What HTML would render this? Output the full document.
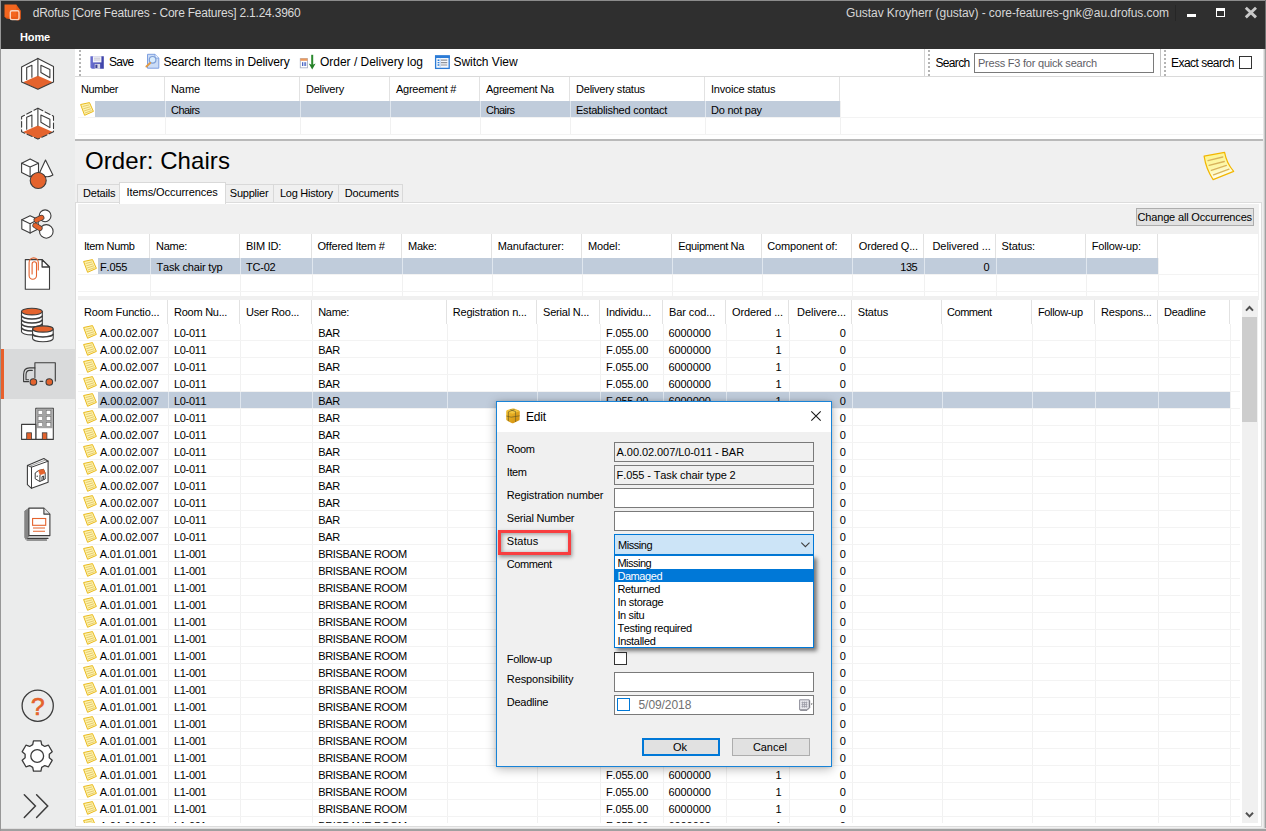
<!DOCTYPE html>
<html lang="en"><head><meta charset="utf-8"><title>dRofus</title>
<style>
*{box-sizing:border-box;margin:0;padding:0}
html,body{width:1266px;height:831px;overflow:hidden;background:#f0f0f0}
body{position:relative;font-family:"Liberation Sans",sans-serif;font-size:11px;color:#000;font-kerning:none}
.a{position:absolute}
.t{position:absolute;white-space:pre;line-height:14px;height:14px}
.vl{position:absolute;width:1px;background:#e6e6e6}
.hl{position:absolute;height:1px;background:#efefef}
svg{position:absolute;overflow:visible}
</style></head>
<body>
<div class="a" style="left:0px;top:0px;width:1266px;height:49px;background:#2f2f2f;"></div>
<div class="a" style="left:0px;top:0px;width:1266px;height:1px;background:#8c8c8c;"></div>
<svg style="left:0px;top:0px" width="24" height="24" viewBox="0 0 24 24"><path d="M16.4 4.8 L20.8 10.8 L20.8 19.2 L18.6 20.6 L6.4 18.6 L4.5 16.8 Z" fill="#ea5a17"/><path d="M4.5 4.6 L16.4 4.4 L16.4 16.8 L4.5 16.8 Z" fill="#f4661f"/><rect x="10.3" y="10.8" width="8.7" height="8.8" rx="1.6" fill="none" stroke="#fbd3bd" stroke-width="1.4"/></svg>
<div class="t" style="font-size:12px;line-height:14px;height:14px;color:#dadada;letter-spacing:-0.220px;left:32.7px;top:6px;">dRofus [Core Features - Core Features] 2.1.24.3960</div>
<div class="t" style="font-weight:bold;color:#ffffff;letter-spacing:-0.139px;left:20.0px;top:30px;">Home</div>
<div class="t" style="font-size:12px;line-height:14px;height:14px;color:#d6d6d6;letter-spacing:-0.068px;left:846.0px;top:6px;">Gustav Kroyherr (gustav) - core-features-gnk@au.drofus.com</div>
<div class="a" style="left:1175px;top:5px;width:1px;height:16px;background:#262626;"></div>
<div class="a" style="left:1187px;top:14px;width:9px;height:3px;background:#ffffff;"></div>
<div class="a" style="left:1216px;top:8px;width:9px;height:9px;background:transparent;border:1px solid #ffffff;border-top-width:3px"></div>
<svg style="left:1245px;top:7px" width="12" height="11" viewBox="0 0 12 11"><path d="M0.8 0.8 L11 10.4 M11 0.8 L0.8 10.4" stroke="#c9c9c9" stroke-width="2.9" fill="none"/></svg>
<div class="a" style="left:0px;top:49px;width:75px;height:782px;background:#ebecec;"></div>
<div class="a" style="left:1px;top:349px;width:74px;height:50px;background:#d9dadb;"></div>
<div class="a" style="left:1px;top:349px;width:3px;height:50px;background:#e8602c;"></div>
<svg style="left:0px;top:0px" width="76" height="831" viewBox="0 0 76 831"><g transform="translate(0,0)"><path d="M37.9 58.4 L53.5 66.4 L53.5 82 L37.9 89.3 L21.6 82 L21.6 67 Z" fill="#fff" stroke="none"/><path d="M37.9 75.8 L52.8 82.3 L37.9 89.3 L23 82.3 Z" fill="#e4632d"/><path d="M37.9 58.4 L53.5 66.4 L53.5 82 L37.9 89.3 L21.6 82 L21.6 67 Z" fill="none" stroke="#3c3c3c" stroke-width="1.1" stroke-linejoin="round" stroke-linecap="round"/><path d="M37.9 58.4 L37.9 75.8" fill="none" stroke="#3c3c3c" stroke-width="1.1" stroke-linejoin="round" stroke-linecap="round"/><path d="M26.7 79.5 L26.7 67.5 L31.9 65.2 L31.9 77.2" fill="none" stroke="#3c3c3c" stroke-width="1.1" stroke-linejoin="round" stroke-linecap="round"/><path d="M40.9 65.2 L49.9 69.5 L49.9 77.8 L40.9 72.5 Z" fill="none" stroke="#3c3c3c" stroke-width="1.1" stroke-linejoin="round" stroke-linecap="round"/></g><g transform="translate(0,49.8)"><path d="M37.9 58.4 L53.5 66.4 L53.5 82 L37.9 89.3 L21.6 82 L21.6 67 Z" fill="#fff" stroke="none"/><path d="M37.9 75.8 L52.8 82.3 L37.9 89.3 L23 82.3 Z" fill="#e4632d"/><path d="M37.9 58.4 L53.5 66.4 L53.5 82 L37.9 89.3 L21.6 82 L21.6 67 Z" fill="none" stroke="#3c3c3c" stroke-width="1.1" stroke-linejoin="round" stroke-linecap="round" stroke-dasharray="5.5 2.6"/><path d="M37.9 58.4 L37.9 75.8" fill="none" stroke="#3c3c3c" stroke-width="1.1" stroke-linejoin="round" stroke-linecap="round"/><path d="M26.7 79.5 L26.7 67.5 L31.9 65.2 L31.9 77.2" fill="none" stroke="#3c3c3c" stroke-width="1.1" stroke-linejoin="round" stroke-linecap="round"/><path d="M40.9 65.2 L49.9 69.5 L49.9 77.8 L40.9 72.5 Z" fill="none" stroke="#3c3c3c" stroke-width="1.1" stroke-linejoin="round" stroke-linecap="round"/></g><path d="M30.1 158.9 L38.5 163.2 L38.5 172.4 L30.1 176.7 L21.6 172.4 L21.6 163.2 Z" fill="#fff" stroke="#3c3c3c" stroke-width="1.1" stroke-linejoin="round" stroke-linecap="round"/><path d="M21.6 163.2 L30.1 167 L38.5 163.2 M30.1 167 L30.1 176.7" fill="none" stroke="#3c3c3c" stroke-width="1.1" stroke-linejoin="round" stroke-linecap="round"/><path d="M45.5 160 L39.7 172.6 Q45 179.5 52.9 175 Z" fill="#fff" stroke="#3c3c3c" stroke-width="1.1" stroke-linejoin="round" stroke-linecap="round"/><circle cx="38.2" cy="180.5" r="8" fill="#e4632d" stroke="#3c3c3c" stroke-width="1.1" stroke-linejoin="round"/><circle cx="45.1" cy="215.8" r="5.9" fill="#fff" stroke="#3c3c3c" stroke-width="1.1" stroke-linejoin="round" stroke-linecap="round"/><circle cx="46.3" cy="231.4" r="6.8" fill="#fff" stroke="#3c3c3c" stroke-width="1.1" stroke-linejoin="round" stroke-linecap="round"/><path d="M30.1 215.7 L38.2 219.6 L38.2 229 L30.1 233.1 L21.8 229 L21.8 219.8 Z" fill="#fff" stroke="#3c3c3c" stroke-width="1.1" stroke-linejoin="round" stroke-linecap="round"/><path d="M21.8 219.8 L30.1 223.8 L38.2 219.6 M30.1 223.8 L30.1 233.1" fill="none" stroke="#3c3c3c" stroke-width="1.1" stroke-linejoin="round" stroke-linecap="round"/><path d="M36.4 220.1 L41.6 217.6 M35.2 225.4 L39.8 228.2" stroke="#3c3c3c" stroke-width="5.6" stroke-linecap="round" fill="none"/><path d="M36.4 220.1 L41.6 217.6 M35.2 225.4 L39.8 228.2" stroke="#e4632d" stroke-width="4.2" stroke-linecap="round" fill="none"/><path d="M25.3 259.6 L42.1 259.6 L49.5 267 L49.5 289.3 L25.3 289.3 Z" fill="#fff" stroke="#3c3c3c" stroke-width="1.1" stroke-linejoin="round" stroke-linecap="round"/><path d="M42.1 259.6 L42.1 267 L49.5 267 Z" fill="#fff" stroke="#3c3c3c" stroke-width="1.3" stroke-linejoin="round"/><path d="M38.3 270 L38.3 262.5 A4.6 4.6 0 0 0 29.1 262.5 L29.1 275.5 A3.7 3.7 0 0 0 36.5 275.5 L36.5 264 A2.2 2.2 0 0 0 32.1 264 L32.1 274" fill="none" stroke="#e4632d" stroke-width="1.1" stroke-linecap="round"/><path d="M21.5 311.6 L21.5 331.6 A10.4 3.3 0 0 0 42.3 331.6 L42.3 311.6 Z" fill="#fff" stroke="#3c3c3c" stroke-width="1.1" stroke-linejoin="round" stroke-linecap="round"/><path d="M21.5 315.6 A10.4 3.3 0 0 0 42.3 315.6" fill="none" stroke="#3c3c3c" stroke-width="1.5"/><path d="M21.5 319.6 A10.4 3.3 0 0 0 42.3 319.6" fill="none" stroke="#3c3c3c" stroke-width="1.5"/><path d="M21.5 323.6 A10.4 3.3 0 0 0 42.3 323.6" fill="none" stroke="#3c3c3c" stroke-width="1.5"/><path d="M21.5 327.6 A10.4 3.3 0 0 0 42.3 327.6" fill="none" stroke="#3c3c3c" stroke-width="1.5"/><ellipse cx="31.9" cy="311.6" rx="10.4" ry="3.3" fill="#e4632d" stroke="#3c3c3c" stroke-width="1.1" stroke-linejoin="round"/><path d="M32.599999999999994 329 L32.599999999999994 338.6 A10.3 3.1 0 0 0 53.2 338.6 L53.2 329 Z" fill="#fff" stroke="#3c3c3c" stroke-width="1.1" stroke-linejoin="round" stroke-linecap="round"/><path d="M32.599999999999994 333.8 A10.3 3.1 0 0 0 53.2 333.8" fill="none" stroke="#3c3c3c" stroke-width="1.5"/><ellipse cx="42.9" cy="329" rx="10.3" ry="3.1" fill="#e4632d" stroke="#3c3c3c" stroke-width="1.1" stroke-linejoin="round"/><path d="M34.9 377.5 L34.9 362.7 L55.3 362.7 L55.3 381" fill="none" stroke="#3c3c3c" stroke-width="1.1" stroke-linejoin="round" stroke-linecap="round"/><path d="M34.9 367.9 L29.5 367.9 Q23.6 367.9 23.6 374.5 L23.6 381.6 L28.6 381.6" fill="none" stroke="#3c3c3c" stroke-width="1.1" stroke-linejoin="round" stroke-linecap="round"/><path d="M32.3 370.4 L29.8 370.4 Q26 370.4 26 375 L26 379.8 L28.6 379.8" fill="none" stroke="#3c3c3c" stroke-width="1.1" stroke-linejoin="round" stroke-linecap="round"/><path d="M40 381.4 L42.8 381.4" fill="none" stroke="#3c3c3c" stroke-width="1.1" stroke-linejoin="round" stroke-linecap="round"/><circle cx="33.4" cy="382" r="3.3" fill="#e4632d" stroke="#3c3c3c" stroke-width="1.1" stroke-linejoin="round"/><circle cx="49.3" cy="382" r="3.3" fill="#e4632d" stroke="#3c3c3c" stroke-width="1.1" stroke-linejoin="round"/><rect x="35.8" y="408.2" width="17.5" height="31.2" fill="#fff" stroke="#3c3c3c" stroke-width="1.1" stroke-linejoin="round" stroke-linecap="round"/><rect x="36.4" y="408.8" width="16.3" height="19.4" fill="#a4a4a4"/><rect x="21.6" y="424.4" width="14.2" height="15" fill="#fff" stroke="#3c3c3c" stroke-width="1.1" stroke-linejoin="round" stroke-linecap="round"/><rect x="38.1" y="410.4" width="4.6" height="4" fill="#fff" stroke="#666" stroke-width="0.5"/><rect x="38.1" y="416.4" width="4.6" height="4" fill="#fff" stroke="#666" stroke-width="0.5"/><rect x="38.1" y="422.6" width="4.6" height="4" fill="#fff" stroke="#666" stroke-width="0.5"/><rect x="46.2" y="410.4" width="4.6" height="4" fill="#fff" stroke="#666" stroke-width="0.5"/><rect x="46.2" y="416.4" width="4.6" height="4" fill="#fff" stroke="#666" stroke-width="0.5"/><rect x="46.2" y="422.6" width="4.6" height="4" fill="#fff" stroke="#666" stroke-width="0.5"/><rect x="26.7" y="432.8" width="4.8" height="6.6" fill="#e4632d" stroke="#3c3c3c" stroke-width="0.8"/><rect x="42.3" y="432.8" width="4.6" height="6.6" fill="#e4632d" stroke="#3c3c3c" stroke-width="0.8"/><path d="M27.4 465.4 L43.9 458.5 L48.1 461.2 L48.1 482.3 L31.5 488.3 L27.4 484.7 Z" fill="#fff" stroke="#3c3c3c" stroke-width="1.1" stroke-linejoin="round" stroke-linecap="round"/><path d="M31.5 467.2 L48.1 461.2 M31.5 467.2 L31.5 488.3 M31.5 467.2 L27.4 465.4" fill="none" stroke="#3c3c3c" stroke-width="1" stroke-linecap="round"/><path d="M29.4 466.3 L46 459.8" fill="none" stroke="#777" stroke-width="0.7"/><path d="M35.2 473 L38.5 470.5 L43.5 469.3 L45.2 473.2 L45.2 479 L39.8 481.5 L35.2 478.8 Z" fill="#fff" stroke="#3c3c3c" stroke-width="1" stroke-linejoin="round"/><path d="M38.5 470.5 L43.5 469.3 L45.2 473.2 L40 474.8 Z" fill="#e4632d" stroke="#e4632d" stroke-width="0.6"/><path d="M40 474.8 L39.8 481.5 M42 480.3 L42 476.6 L43.6 476 L43.6 479.6" fill="none" stroke="#3c3c3c" stroke-width="1"/><circle cx="37.2" cy="476.3" r="0.7" fill="#3c3c3c"/><path d="M27 540 L46.5 540 M26 538.4 L48 538.4" fill="none" stroke="#3c3c3c" stroke-width="1.1" stroke-linejoin="round" stroke-linecap="round"/><path d="M24.8 511 L29 508.2 L29 536 L26 539.5 L24.8 537.5 Z" fill="#858585" stroke="#858585" stroke-width="1" stroke-linejoin="round"/><path d="M28.9 508.1 L43.9 508.1 L49.9 514.1 L49.9 535.6 L28.9 535.6 Z" fill="#fff" stroke="#3c3c3c" stroke-width="1.1" stroke-linejoin="round" stroke-linecap="round"/><path d="M43.9 508.1 L43.9 514.1 L49.9 514.1" fill="#e3e3e3" stroke="#3c3c3c" stroke-width="1.1" stroke-linejoin="round"/><rect x="32.6" y="518.5" width="13.1" height="6.8" fill="none" stroke="#e4632d" stroke-width="1.1"/><path d="M33 528 L45 528 M33 531.3 L45 531.3" stroke="#e4632d" stroke-width="1.1" fill="none"/><circle cx="37.7" cy="705.7" r="15.6" fill="none" stroke="#3c3c3c" stroke-width="1.3"/><text x="37.9" y="714.6" text-anchor="middle" font-family="Liberation Sans, sans-serif" font-size="24.5" fill="#e4632d" stroke="#e4632d" stroke-width="0.7">?</text><path d="M32.71 744.66 L33.48 740.85 L40.92 740.85 L41.69 744.66 L44.78 746.44 L48.46 745.20 L52.18 751.65 L49.27 754.22 L49.27 757.78 L52.18 760.35 L48.46 766.80 L44.78 765.56 L41.69 767.34 L40.92 771.15 L33.48 771.15 L32.71 767.34 L29.62 765.56 L25.94 766.80 L22.22 760.35 L25.13 757.78 L25.13 754.22 L22.22 751.65 L25.94 745.20 L29.62 746.44 Z" fill="#fff" stroke="#3c3c3c" stroke-width="1.3" stroke-linejoin="round"/><circle cx="37.2" cy="756" r="6.4" fill="#fff" stroke="#3c3c3c" stroke-width="1.3"/><path d="M24.3 794.8 L35.4 805.9 L24.3 817.4 M36.6 794.8 L47.7 805.9 L36.6 817.4" fill="none" stroke="#3c3c3c" stroke-width="1.5" stroke-linecap="round" stroke-linejoin="miter"/></svg>
<div class="a" style="left:75px;top:49px;width:1191px;height:91px;background:#ffffff;"></div>
<div class="a" style="left:75px;top:76px;width:1191px;height:1px;background:#dadada;"></div>
<div class="a" style="left:79px;top:50px;width:2px;height:26px;background:repeating-linear-gradient(#b4b4b4 0 2px,transparent 2px 4px)"></div>
<svg style="left:89px;top:55px" width="16" height="16" viewBox="0 0 16 16"><defs><linearGradient id="sv" x1="0" y1="0" x2="1" y2="0"><stop offset="0" stop-color="#6a70d2"/><stop offset="1" stop-color="#3b40a6"/></linearGradient></defs><path d="M1.4 1.2 H14.8 V13.8 H2.8 L1.4 12.4 Z" fill="url(#sv)"/><rect x="3.9" y="1.2" width="8.5" height="6.2" fill="#f4f4f8"/><path d="M5 3.2 H11.2 M5 5 H11.2" stroke="#b9b9c6" stroke-width="0.8"/><rect x="5.7" y="8.9" width="5.4" height="4.9" fill="#d9dae6"/><rect x="6.4" y="9.7" width="2" height="3.3" fill="#3b3f96"/></svg>
<div class="t" style="font-size:12px;line-height:14px;height:14px;letter-spacing:-0.712px;left:109.0px;top:55px;">Save</div>
<svg style="left:143.6px;top:53.2px" width="16" height="16" viewBox="0 0 16 16"><path d="M3.5 1.3 H11 L14.8 5.1 V15.2 H3.5 Z" fill="#cbdcf6" stroke="#7d9fe0" stroke-width="1"/><path d="M11 1.3 V5.1 H14.8" fill="#eef4fd" stroke="#7d9fe0" stroke-width="0.9"/><circle cx="8.6" cy="6.8" r="3.3" fill="#d9ecfc" stroke="#7f9fd6" stroke-width="1.2"/><path d="M6.2 10 L2.4 13.5" stroke="#e09a45" stroke-width="1.9" stroke-linecap="round"/></svg>
<div class="t" style="font-size:12px;line-height:14px;height:14px;letter-spacing:-0.168px;left:163.5px;top:55px;">Search Items in Delivery</div>
<svg style="left:299px;top:54px" width="18" height="16" viewBox="0 0 18 16"><rect x="1.3" y="4.6" width="7.2" height="9.2" fill="#fff" stroke="#a9b2c6" stroke-width="0.9"/><rect x="1.3" y="4.4" width="7.2" height="2.4" fill="#ec9a5c"/><rect x="3" y="8.2" width="1.3" height="3.8" fill="#4a67c4"/><rect x="5.2" y="8.2" width="2" height="3.8" fill="#4a67c4" opacity="0.8"/><path d="M13.2 0.8 V12" stroke="#2b8a2e" stroke-width="2"/><path d="M9.8 9.6 L13.2 15.4 L16.6 9.6 L13.2 11 Z" fill="#237f27"/></svg>
<div class="t" style="font-size:12px;line-height:14px;height:14px;letter-spacing:-0.018px;left:320.0px;top:55px;">Order / Delivery log</div>
<svg style="left:434px;top:54px" width="16" height="16" viewBox="0 0 16 16"><rect x="1.6" y="2" width="13.6" height="12.4" fill="#f4f8fd" stroke="#2b7bd6" stroke-width="1.3"/><rect x="1" y="1.4" width="14.9" height="2.6" fill="#2b7bd6"/><path d="M3.6 6.2 H5.4 M3.6 8.6 H5.4 M3.6 11 H5.4" stroke="#2b7bd6" stroke-width="1.4"/><path d="M7 6.2 H13.2 M7 8.6 H13.2 M7 11 H13.2" stroke="#8f9299" stroke-width="1.2"/><path d="M6.2 4.5 V13.6" stroke="#a9c8ee" stroke-width="0.8"/></svg>
<div class="t" style="font-size:12px;line-height:14px;height:14px;letter-spacing:-0.062px;left:453.5px;top:55px;">Switch View</div>
<div class="a" style="left:924px;top:49px;width:1px;height:27px;background:#d4d4d4;"></div>
<div class="a" style="left:928px;top:50px;width:2px;height:26px;background:repeating-linear-gradient(#b4b4b4 0 2px,transparent 2px 4px)"></div>
<div class="t" style="font-size:12px;line-height:14px;height:14px;letter-spacing:-0.669px;left:935.5px;top:56px;">Search</div>
<div class="a" style="left:974px;top:53px;width:180px;height:20px;background:#fff;border:1px solid #7a7a7a"></div>
<div class="t" style="color:#5e5e66;letter-spacing:-0.228px;left:978.0px;top:56px;">Press F3 for quick search</div>
<div class="a" style="left:1160px;top:49px;width:1px;height:27px;background:#c4c4c4;"></div>
<div class="a" style="left:1164px;top:50px;width:2px;height:26px;background:repeating-linear-gradient(#b4b4b4 0 2px,transparent 2px 4px)"></div>
<div class="t" style="font-size:12px;line-height:14px;height:14px;letter-spacing:-0.530px;left:1171.0px;top:56px;">Exact search</div>
<div class="a" style="left:1239px;top:56px;width:13px;height:13px;background:#fff;border:1px solid #333"></div>
<svg width="0" height="0" style="left:0;top:0"><defs>
<symbol id="nt" viewBox="0 0 14 14"><path d="M0.6 2.5 L9.5 0.6 L13.4 9.4 L4.6 13.3 Z" fill="#fdf4ae" stroke="#e9b91e" stroke-width="1" stroke-linejoin="round"/><path d="M2.6 4.5 L9.2 2.9 M3.3 6.8 L10.2 4.8 M4.1 9 L11.1 6.7 M5 11 L11.6 8.6" stroke="#d6ad42" stroke-width="0.6" fill="none"/></symbol>
</defs></svg>
<div class="a" style="left:165px;top:101px;width:1px;height:34px;background:#f1f1f1;"></div>
<div class="a" style="left:164px;top:77px;width:1px;height:24px;background:#e2e2e2;"></div>
<div class="a" style="left:300px;top:101px;width:1px;height:34px;background:#f1f1f1;"></div>
<div class="a" style="left:299px;top:77px;width:1px;height:24px;background:#e2e2e2;"></div>
<div class="a" style="left:390px;top:101px;width:1px;height:34px;background:#f1f1f1;"></div>
<div class="a" style="left:389px;top:77px;width:1px;height:24px;background:#e2e2e2;"></div>
<div class="a" style="left:480px;top:101px;width:1px;height:34px;background:#f1f1f1;"></div>
<div class="a" style="left:479px;top:77px;width:1px;height:24px;background:#e2e2e2;"></div>
<div class="a" style="left:570px;top:101px;width:1px;height:34px;background:#f1f1f1;"></div>
<div class="a" style="left:569px;top:77px;width:1px;height:24px;background:#e2e2e2;"></div>
<div class="a" style="left:705px;top:101px;width:1px;height:34px;background:#f1f1f1;"></div>
<div class="a" style="left:704px;top:77px;width:1px;height:24px;background:#e2e2e2;"></div>
<div class="a" style="left:840px;top:101px;width:1px;height:34px;background:#f1f1f1;"></div>
<div class="a" style="left:839px;top:77px;width:1px;height:24px;background:#e2e2e2;"></div>
<div class="a" style="left:78px;top:117px;width:1185px;height:1px;background:#f3f3f3;"></div>
<div class="a" style="left:78px;top:134px;width:1185px;height:1px;background:#f3f3f3;"></div>
<div class="a" style="left:95px;top:101px;width:745px;height:16px;background:#c0ccdb;"></div>
<div class="a" style="left:165px;top:101px;width:1px;height:16px;background:#dfe6ee;"></div>
<div class="a" style="left:300px;top:101px;width:1px;height:16px;background:#dfe6ee;"></div>
<div class="a" style="left:390px;top:101px;width:1px;height:16px;background:#dfe6ee;"></div>
<div class="a" style="left:480px;top:101px;width:1px;height:16px;background:#dfe6ee;"></div>
<div class="a" style="left:570px;top:101px;width:1px;height:16px;background:#dfe6ee;"></div>
<div class="a" style="left:705px;top:101px;width:1px;height:16px;background:#dfe6ee;"></div>
<div class="t" style="letter-spacing:-0.353px;left:81.0px;top:82px;">Number</div>
<div class="t" style="letter-spacing:-0.084px;left:171.0px;top:82px;">Name</div>
<div class="t" style="letter-spacing:-0.223px;left:306.0px;top:82px;">Delivery</div>
<div class="t" style="letter-spacing:-0.258px;left:396.0px;top:82px;">Agreement #</div>
<div class="t" style="letter-spacing:-0.266px;left:486.0px;top:82px;">Agreement Na</div>
<div class="t" style="letter-spacing:-0.216px;left:576.0px;top:82px;">Delivery status</div>
<div class="t" style="letter-spacing:-0.216px;left:711.0px;top:82px;">Invoice status</div>
<svg style="left:80px;top:102px" width="14" height="14"><use href="#nt"/></svg>
<div class="t" style="letter-spacing:-0.546px;left:171.0px;top:103px;">Chairs</div>
<div class="t" style="letter-spacing:-0.546px;left:486.0px;top:103px;">Chairs</div>
<div class="t" style="letter-spacing:-0.226px;left:576.0px;top:103px;">Established contact</div>
<div class="t" style="letter-spacing:-0.239px;left:711.0px;top:103px;">Do not pay</div>
<div class="a" style="left:75px;top:139px;width:1191px;height:2px;background:#b9b9b9;"></div>
<div class="a" style="left:75px;top:141px;width:1191px;height:690px;background:#f0f0f0;"></div>
<div class="t" style="font-size:24px;line-height:28px;height:28px;letter-spacing:0.075px;left:85.0px;top:147px;">Order: Chairs</div>
<svg style="left:1200px;top:148px" width="40" height="36" viewBox="0 0 40 36"><defs><linearGradient id="ng" x1="0" y1="0" x2="0.35" y2="1"><stop offset="0" stop-color="#fdf58c"/><stop offset="0.6" stop-color="#fdf7a8"/><stop offset="1" stop-color="#fffef2"/></linearGradient></defs><path d="M4.1 8.2 L24.6 4.3 Q26.5 15 33.7 23.4 L13.1 31.6 Q6 21 4.1 8.2 Z" fill="url(#ng)" stroke="#f2b600" stroke-width="1.2" stroke-linejoin="round"/><path d="M8 12.6 L22.8 9 M9.1 17.4 L24.3 13.5 M11.3 22.3 L26.4 17.4 M13.5 26.8 L29 21.2" stroke="#d8b35c" stroke-width="1.3" fill="none" stroke-linecap="round"/></svg>
<div class="a" style="left:75px;top:202px;width:1187px;height:625px;background:#f0f0f0;border:1px solid #dcdcdc;box-shadow:inset 2px 1px 0 0 #fff,inset -2px -2px 0 0 #fff"></div>
<div class="a" style="left:77px;top:184px;width:43px;height:18px;background:#f0f0f0;border:1px solid #d9d9d9;border-bottom:none"></div>
<div class="a" style="left:225px;top:184px;width:49px;height:18px;background:#f0f0f0;border:1px solid #d9d9d9;border-bottom:none"></div>
<div class="a" style="left:273px;top:184px;width:66px;height:18px;background:#f0f0f0;border:1px solid #d9d9d9;border-bottom:none"></div>
<div class="a" style="left:338px;top:184px;width:65px;height:18px;background:#f0f0f0;border:1px solid #d9d9d9;border-bottom:none"></div>
<div class="a" style="left:119px;top:182px;width:107px;height:22px;background:#ffffff;border:1px solid #d9d9d9;border-bottom:none"></div>
<div class="t" style="letter-spacing:-0.202px;left:83.0px;top:186px;">Details</div>
<div class="t" style="letter-spacing:-0.065px;left:126.5px;top:185px;">Items/Occurrences</div>
<div class="t" style="letter-spacing:-0.231px;left:229.8px;top:186px;">Supplier</div>
<div class="t" style="letter-spacing:-0.248px;left:279.9px;top:186px;">Log History</div>
<div class="t" style="letter-spacing:-0.170px;left:344.7px;top:186px;">Documents</div>
<div class="a" style="left:1136px;top:208px;width:118px;height:18px;background:#e1e1e1;border:1px solid #adadad"></div>
<div class="t" style="letter-spacing:-0.163px;left:1137.5px;top:210px;">Change all Occurrences</div>
<div class="a" style="left:78px;top:234px;width:1180px;height:62px;background:#ffffff;"></div>
<div class="a" style="left:150px;top:258px;width:1px;height:38px;background:#f1f1f1;"></div>
<div class="a" style="left:149px;top:234px;width:1px;height:24px;background:#e2e2e2;"></div>
<div class="a" style="left:240px;top:258px;width:1px;height:38px;background:#f1f1f1;"></div>
<div class="a" style="left:239px;top:234px;width:1px;height:24px;background:#e2e2e2;"></div>
<div class="a" style="left:312px;top:258px;width:1px;height:38px;background:#f1f1f1;"></div>
<div class="a" style="left:311px;top:234px;width:1px;height:24px;background:#e2e2e2;"></div>
<div class="a" style="left:402px;top:258px;width:1px;height:38px;background:#f1f1f1;"></div>
<div class="a" style="left:401px;top:234px;width:1px;height:24px;background:#e2e2e2;"></div>
<div class="a" style="left:492px;top:258px;width:1px;height:38px;background:#f1f1f1;"></div>
<div class="a" style="left:491px;top:234px;width:1px;height:24px;background:#e2e2e2;"></div>
<div class="a" style="left:582px;top:258px;width:1px;height:38px;background:#f1f1f1;"></div>
<div class="a" style="left:581px;top:234px;width:1px;height:24px;background:#e2e2e2;"></div>
<div class="a" style="left:672px;top:258px;width:1px;height:38px;background:#f1f1f1;"></div>
<div class="a" style="left:671px;top:234px;width:1px;height:24px;background:#e2e2e2;"></div>
<div class="a" style="left:762px;top:258px;width:1px;height:38px;background:#f1f1f1;"></div>
<div class="a" style="left:761px;top:234px;width:1px;height:24px;background:#e2e2e2;"></div>
<div class="a" style="left:852px;top:258px;width:1px;height:38px;background:#f1f1f1;"></div>
<div class="a" style="left:851px;top:234px;width:1px;height:24px;background:#e2e2e2;"></div>
<div class="a" style="left:924px;top:258px;width:1px;height:38px;background:#f1f1f1;"></div>
<div class="a" style="left:923px;top:234px;width:1px;height:24px;background:#e2e2e2;"></div>
<div class="a" style="left:996px;top:258px;width:1px;height:38px;background:#f1f1f1;"></div>
<div class="a" style="left:995px;top:234px;width:1px;height:24px;background:#e2e2e2;"></div>
<div class="a" style="left:1086px;top:258px;width:1px;height:38px;background:#f1f1f1;"></div>
<div class="a" style="left:1085px;top:234px;width:1px;height:24px;background:#e2e2e2;"></div>
<div class="a" style="left:1158px;top:258px;width:1px;height:38px;background:#f1f1f1;"></div>
<div class="a" style="left:1157px;top:234px;width:1px;height:24px;background:#e2e2e2;"></div>
<div class="a" style="left:78px;top:274px;width:1180px;height:1px;background:#f3f3f3;"></div>
<div class="a" style="left:78px;top:291px;width:1180px;height:1px;background:#f3f3f3;"></div>
<div class="a" style="left:98px;top:258px;width:1060px;height:16px;background:#c0ccdb;"></div>
<div class="a" style="left:150px;top:258px;width:1px;height:16px;background:#dfe6ee;"></div>
<div class="a" style="left:240px;top:258px;width:1px;height:16px;background:#dfe6ee;"></div>
<div class="a" style="left:312px;top:258px;width:1px;height:16px;background:#dfe6ee;"></div>
<div class="a" style="left:402px;top:258px;width:1px;height:16px;background:#dfe6ee;"></div>
<div class="a" style="left:492px;top:258px;width:1px;height:16px;background:#dfe6ee;"></div>
<div class="a" style="left:582px;top:258px;width:1px;height:16px;background:#dfe6ee;"></div>
<div class="a" style="left:672px;top:258px;width:1px;height:16px;background:#dfe6ee;"></div>
<div class="a" style="left:762px;top:258px;width:1px;height:16px;background:#dfe6ee;"></div>
<div class="a" style="left:852px;top:258px;width:1px;height:16px;background:#dfe6ee;"></div>
<div class="a" style="left:924px;top:258px;width:1px;height:16px;background:#dfe6ee;"></div>
<div class="a" style="left:996px;top:258px;width:1px;height:16px;background:#dfe6ee;"></div>
<div class="a" style="left:1086px;top:258px;width:1px;height:16px;background:#dfe6ee;"></div>
<div class="t" style="letter-spacing:-0.343px;left:83.9px;top:239px;">Item Numb</div>
<div class="t" style="letter-spacing:-0.292px;left:156.1px;top:239px;">Name:</div>
<div class="t" style="letter-spacing:-0.236px;left:246.0px;top:239px;">BIM ID:</div>
<div class="t" style="letter-spacing:-0.226px;left:317.5px;top:239px;">Offered Item #</div>
<div class="t" style="letter-spacing:-0.270px;left:408.0px;top:239px;">Make:</div>
<div class="t" style="letter-spacing:-0.135px;left:497.8px;top:239px;">Manufacturer:</div>
<div class="t" style="letter-spacing:-0.135px;left:588.1px;top:239px;">Model:</div>
<div class="t" style="letter-spacing:-0.333px;left:678.3px;top:239px;">Equipment Na</div>
<div class="t" style="letter-spacing:-0.165px;left:767.3px;top:239px;">Component of:</div>
<div class="t" style="letter-spacing:-0.178px;left:858.8px;top:239px;">Ordered Q...</div>
<div class="t" style="letter-spacing:-0.022px;left:932.4px;top:239px;">Delivered ...</div>
<div class="t" style="letter-spacing:-0.106px;left:1001.5px;top:239px;">Status:</div>
<div class="t" style="letter-spacing:-0.163px;left:1091.7px;top:239px;">Follow-up:</div>
<svg style="left:83px;top:259px" width="14" height="14"><use href="#nt"/></svg>
<div class="t" style="letter-spacing:-0.202px;left:100.1px;top:260px;">F.055</div>
<div class="t" style="letter-spacing:-0.167px;left:156.4px;top:260px;">Task chair typ</div>
<div class="t" style="letter-spacing:-0.232px;left:246.0px;top:260px;">TC-02</div>
<div class="t" style="letter-spacing:-0.449px;right:348.75px;top:260px;">135</div>
<div class="t" style="right:276.30px;top:260px;">0</div>
<div class="a" style="left:78px;top:300px;width:1182px;height:526px;background:#ffffff;"></div>
<div class="a" style="left:168px;top:324px;width:1px;height:499px;background:#f1f1f1;"></div>
<div class="a" style="left:167px;top:300px;width:1px;height:24px;background:#e2e2e2;"></div>
<div class="a" style="left:240px;top:324px;width:1px;height:499px;background:#f1f1f1;"></div>
<div class="a" style="left:239px;top:300px;width:1px;height:24px;background:#e2e2e2;"></div>
<div class="a" style="left:312px;top:324px;width:1px;height:499px;background:#f1f1f1;"></div>
<div class="a" style="left:311px;top:300px;width:1px;height:24px;background:#e2e2e2;"></div>
<div class="a" style="left:447px;top:324px;width:1px;height:499px;background:#f1f1f1;"></div>
<div class="a" style="left:446px;top:300px;width:1px;height:24px;background:#e2e2e2;"></div>
<div class="a" style="left:537px;top:324px;width:1px;height:499px;background:#f1f1f1;"></div>
<div class="a" style="left:536px;top:300px;width:1px;height:24px;background:#e2e2e2;"></div>
<div class="a" style="left:600px;top:324px;width:1px;height:499px;background:#f1f1f1;"></div>
<div class="a" style="left:599px;top:300px;width:1px;height:24px;background:#e2e2e2;"></div>
<div class="a" style="left:663px;top:324px;width:1px;height:499px;background:#f1f1f1;"></div>
<div class="a" style="left:662px;top:300px;width:1px;height:24px;background:#e2e2e2;"></div>
<div class="a" style="left:726px;top:324px;width:1px;height:499px;background:#f1f1f1;"></div>
<div class="a" style="left:725px;top:300px;width:1px;height:24px;background:#e2e2e2;"></div>
<div class="a" style="left:789px;top:324px;width:1px;height:499px;background:#f1f1f1;"></div>
<div class="a" style="left:788px;top:300px;width:1px;height:24px;background:#e2e2e2;"></div>
<div class="a" style="left:852px;top:324px;width:1px;height:499px;background:#f1f1f1;"></div>
<div class="a" style="left:851px;top:300px;width:1px;height:24px;background:#e2e2e2;"></div>
<div class="a" style="left:942px;top:324px;width:1px;height:499px;background:#f1f1f1;"></div>
<div class="a" style="left:941px;top:300px;width:1px;height:24px;background:#e2e2e2;"></div>
<div class="a" style="left:1032px;top:324px;width:1px;height:499px;background:#f1f1f1;"></div>
<div class="a" style="left:1031px;top:300px;width:1px;height:24px;background:#e2e2e2;"></div>
<div class="a" style="left:1095px;top:324px;width:1px;height:499px;background:#f1f1f1;"></div>
<div class="a" style="left:1094px;top:300px;width:1px;height:24px;background:#e2e2e2;"></div>
<div class="a" style="left:1158px;top:324px;width:1px;height:499px;background:#f1f1f1;"></div>
<div class="a" style="left:1157px;top:300px;width:1px;height:24px;background:#e2e2e2;"></div>
<div class="a" style="left:1230px;top:324px;width:1px;height:499px;background:#f1f1f1;"></div>
<div class="a" style="left:1229px;top:300px;width:1px;height:24px;background:#e2e2e2;"></div>
<div class="t" style="letter-spacing:-0.143px;left:83.9px;top:305px;">Room Functio...</div>
<div class="t" style="letter-spacing:-0.250px;left:174.0px;top:305px;">Room Nu...</div>
<div class="t" style="letter-spacing:-0.228px;left:246.0px;top:305px;">User Roo...</div>
<div class="t" style="letter-spacing:-0.292px;left:318.2px;top:305px;">Name:</div>
<div class="t" style="letter-spacing:-0.178px;left:452.7px;top:305px;">Registration n...</div>
<div class="t" style="letter-spacing:-0.199px;left:543.0px;top:305px;">Serial N...</div>
<div class="t" style="letter-spacing:-0.180px;left:606.0px;top:305px;">Individu...</div>
<div class="t" style="letter-spacing:-0.088px;left:669.0px;top:305px;">Bar cod...</div>
<div class="t" style="letter-spacing:-0.162px;left:732.1px;top:305px;">Ordered ...</div>
<div class="t" style="letter-spacing:-0.065px;left:797.1px;top:305px;">Delivere...</div>
<div class="t" style="letter-spacing:-0.164px;left:857.8px;top:305px;">Status</div>
<div class="t" style="letter-spacing:-0.453px;left:947.0px;top:305px;">Comment</div>
<div class="t" style="letter-spacing:-0.319px;left:1037.9px;top:305px;">Follow-up</div>
<div class="t" style="letter-spacing:-0.188px;left:1101.0px;top:305px;">Respons...</div>
<div class="t" style="letter-spacing:-0.238px;left:1164.0px;top:305px;">Deadline</div>
<div class="a" style="left:78px;top:340px;width:1162px;height:1px;background:#f3f3f3;"></div>
<div class="a" style="left:78px;top:357px;width:1162px;height:1px;background:#f3f3f3;"></div>
<div class="a" style="left:78px;top:374px;width:1162px;height:1px;background:#f3f3f3;"></div>
<div class="a" style="left:78px;top:391px;width:1162px;height:1px;background:#f3f3f3;"></div>
<div class="a" style="left:78px;top:408px;width:1162px;height:1px;background:#f3f3f3;"></div>
<div class="a" style="left:78px;top:425px;width:1162px;height:1px;background:#f3f3f3;"></div>
<div class="a" style="left:78px;top:442px;width:1162px;height:1px;background:#f3f3f3;"></div>
<div class="a" style="left:78px;top:459px;width:1162px;height:1px;background:#f3f3f3;"></div>
<div class="a" style="left:78px;top:476px;width:1162px;height:1px;background:#f3f3f3;"></div>
<div class="a" style="left:78px;top:493px;width:1162px;height:1px;background:#f3f3f3;"></div>
<div class="a" style="left:78px;top:510px;width:1162px;height:1px;background:#f3f3f3;"></div>
<div class="a" style="left:78px;top:527px;width:1162px;height:1px;background:#f3f3f3;"></div>
<div class="a" style="left:78px;top:544px;width:1162px;height:1px;background:#f3f3f3;"></div>
<div class="a" style="left:78px;top:561px;width:1162px;height:1px;background:#f3f3f3;"></div>
<div class="a" style="left:78px;top:578px;width:1162px;height:1px;background:#f3f3f3;"></div>
<div class="a" style="left:78px;top:595px;width:1162px;height:1px;background:#f3f3f3;"></div>
<div class="a" style="left:78px;top:612px;width:1162px;height:1px;background:#f3f3f3;"></div>
<div class="a" style="left:78px;top:629px;width:1162px;height:1px;background:#f3f3f3;"></div>
<div class="a" style="left:78px;top:646px;width:1162px;height:1px;background:#f3f3f3;"></div>
<div class="a" style="left:78px;top:663px;width:1162px;height:1px;background:#f3f3f3;"></div>
<div class="a" style="left:78px;top:680px;width:1162px;height:1px;background:#f3f3f3;"></div>
<div class="a" style="left:78px;top:697px;width:1162px;height:1px;background:#f3f3f3;"></div>
<div class="a" style="left:78px;top:714px;width:1162px;height:1px;background:#f3f3f3;"></div>
<div class="a" style="left:78px;top:731px;width:1162px;height:1px;background:#f3f3f3;"></div>
<div class="a" style="left:78px;top:748px;width:1162px;height:1px;background:#f3f3f3;"></div>
<div class="a" style="left:78px;top:765px;width:1162px;height:1px;background:#f3f3f3;"></div>
<div class="a" style="left:78px;top:782px;width:1162px;height:1px;background:#f3f3f3;"></div>
<div class="a" style="left:78px;top:799px;width:1162px;height:1px;background:#f3f3f3;"></div>
<div class="a" style="left:78px;top:816px;width:1162px;height:1px;background:#f3f3f3;"></div>
<div class="a" style="left:98px;top:392px;width:1132px;height:16px;background:#c0ccdb;"></div>
<div class="a" style="left:168px;top:392px;width:1px;height:16px;background:#dfe6ee;"></div>
<div class="a" style="left:240px;top:392px;width:1px;height:16px;background:#dfe6ee;"></div>
<div class="a" style="left:312px;top:392px;width:1px;height:16px;background:#dfe6ee;"></div>
<div class="a" style="left:447px;top:392px;width:1px;height:16px;background:#dfe6ee;"></div>
<div class="a" style="left:537px;top:392px;width:1px;height:16px;background:#dfe6ee;"></div>
<div class="a" style="left:600px;top:392px;width:1px;height:16px;background:#dfe6ee;"></div>
<div class="a" style="left:663px;top:392px;width:1px;height:16px;background:#dfe6ee;"></div>
<div class="a" style="left:726px;top:392px;width:1px;height:16px;background:#dfe6ee;"></div>
<div class="a" style="left:789px;top:392px;width:1px;height:16px;background:#dfe6ee;"></div>
<div class="a" style="left:852px;top:392px;width:1px;height:16px;background:#dfe6ee;"></div>
<div class="a" style="left:942px;top:392px;width:1px;height:16px;background:#dfe6ee;"></div>
<div class="a" style="left:1032px;top:392px;width:1px;height:16px;background:#dfe6ee;"></div>
<div class="a" style="left:1095px;top:392px;width:1px;height:16px;background:#dfe6ee;"></div>
<div class="a" style="left:1158px;top:392px;width:1px;height:16px;background:#dfe6ee;"></div>
<div class="a" style="left:78px;top:299px;width:1165px;height:524px;overflow:hidden">
<svg style="left:5px;top:26px" width="14" height="14"><use href="#nt"/></svg>
<div class="t" style="letter-spacing:-0.057px;left:22.099999999999994px;top:27px;">A.00.02.007</div>
<div class="t" style="letter-spacing:-0.322px;left:96.0px;top:27px;">L0-011</div>
<div class="t" style="letter-spacing:-0.305px;left:240.2px;top:27px;">BAR</div>
<div class="t" style="letter-spacing:-0.162px;left:528.0px;top:27px;">F.055.00</div>
<div class="t" style="letter-spacing:-0.045px;left:590.4px;top:27px;">6000000</div>
<div class="t" style="left:697.5px;top:27px">1</div><div class="t" style="left:761.8px;top:27px">0</div>
<svg style="left:5px;top:43px" width="14" height="14"><use href="#nt"/></svg>
<div class="t" style="letter-spacing:-0.057px;left:22.099999999999994px;top:44px;">A.00.02.007</div>
<div class="t" style="letter-spacing:-0.322px;left:96.0px;top:44px;">L0-011</div>
<div class="t" style="letter-spacing:-0.305px;left:240.2px;top:44px;">BAR</div>
<div class="t" style="letter-spacing:-0.162px;left:528.0px;top:44px;">F.055.00</div>
<div class="t" style="letter-spacing:-0.045px;left:590.4px;top:44px;">6000000</div>
<div class="t" style="left:697.5px;top:44px">1</div><div class="t" style="left:761.8px;top:44px">0</div>
<svg style="left:5px;top:60px" width="14" height="14"><use href="#nt"/></svg>
<div class="t" style="letter-spacing:-0.057px;left:22.099999999999994px;top:61px;">A.00.02.007</div>
<div class="t" style="letter-spacing:-0.322px;left:96.0px;top:61px;">L0-011</div>
<div class="t" style="letter-spacing:-0.305px;left:240.2px;top:61px;">BAR</div>
<div class="t" style="letter-spacing:-0.162px;left:528.0px;top:61px;">F.055.00</div>
<div class="t" style="letter-spacing:-0.045px;left:590.4px;top:61px;">6000000</div>
<div class="t" style="left:697.5px;top:61px">1</div><div class="t" style="left:761.8px;top:61px">0</div>
<svg style="left:5px;top:77px" width="14" height="14"><use href="#nt"/></svg>
<div class="t" style="letter-spacing:-0.057px;left:22.099999999999994px;top:78px;">A.00.02.007</div>
<div class="t" style="letter-spacing:-0.322px;left:96.0px;top:78px;">L0-011</div>
<div class="t" style="letter-spacing:-0.305px;left:240.2px;top:78px;">BAR</div>
<div class="t" style="letter-spacing:-0.162px;left:528.0px;top:78px;">F.055.00</div>
<div class="t" style="letter-spacing:-0.045px;left:590.4px;top:78px;">6000000</div>
<div class="t" style="left:697.5px;top:78px">1</div><div class="t" style="left:761.8px;top:78px">0</div>
<svg style="left:5px;top:94px" width="14" height="14"><use href="#nt"/></svg>
<div class="t" style="letter-spacing:-0.057px;left:22.099999999999994px;top:95px;">A.00.02.007</div>
<div class="t" style="letter-spacing:-0.322px;left:96.0px;top:95px;">L0-011</div>
<div class="t" style="letter-spacing:-0.305px;left:240.2px;top:95px;">BAR</div>
<div class="t" style="letter-spacing:-0.162px;left:528.0px;top:95px;">F.055.00</div>
<div class="t" style="letter-spacing:-0.045px;left:590.4px;top:95px;">6000000</div>
<div class="t" style="left:697.5px;top:95px">1</div><div class="t" style="left:761.8px;top:95px">0</div>
<svg style="left:5px;top:111px" width="14" height="14"><use href="#nt"/></svg>
<div class="t" style="letter-spacing:-0.057px;left:22.099999999999994px;top:112px;">A.00.02.007</div>
<div class="t" style="letter-spacing:-0.322px;left:96.0px;top:112px;">L0-011</div>
<div class="t" style="letter-spacing:-0.305px;left:240.2px;top:112px;">BAR</div>
<div class="t" style="letter-spacing:-0.162px;left:528.0px;top:112px;">F.055.00</div>
<div class="t" style="letter-spacing:-0.045px;left:590.4px;top:112px;">6000000</div>
<div class="t" style="left:697.5px;top:112px">1</div><div class="t" style="left:761.8px;top:112px">0</div>
<svg style="left:5px;top:128px" width="14" height="14"><use href="#nt"/></svg>
<div class="t" style="letter-spacing:-0.057px;left:22.099999999999994px;top:129px;">A.00.02.007</div>
<div class="t" style="letter-spacing:-0.322px;left:96.0px;top:129px;">L0-011</div>
<div class="t" style="letter-spacing:-0.305px;left:240.2px;top:129px;">BAR</div>
<div class="t" style="letter-spacing:-0.162px;left:528.0px;top:129px;">F.055.00</div>
<div class="t" style="letter-spacing:-0.045px;left:590.4px;top:129px;">6000000</div>
<div class="t" style="left:697.5px;top:129px">1</div><div class="t" style="left:761.8px;top:129px">0</div>
<svg style="left:5px;top:145px" width="14" height="14"><use href="#nt"/></svg>
<div class="t" style="letter-spacing:-0.057px;left:22.099999999999994px;top:146px;">A.00.02.007</div>
<div class="t" style="letter-spacing:-0.322px;left:96.0px;top:146px;">L0-011</div>
<div class="t" style="letter-spacing:-0.305px;left:240.2px;top:146px;">BAR</div>
<div class="t" style="letter-spacing:-0.162px;left:528.0px;top:146px;">F.055.00</div>
<div class="t" style="letter-spacing:-0.045px;left:590.4px;top:146px;">6000000</div>
<div class="t" style="left:697.5px;top:146px">1</div><div class="t" style="left:761.8px;top:146px">0</div>
<svg style="left:5px;top:162px" width="14" height="14"><use href="#nt"/></svg>
<div class="t" style="letter-spacing:-0.057px;left:22.099999999999994px;top:163px;">A.00.02.007</div>
<div class="t" style="letter-spacing:-0.322px;left:96.0px;top:163px;">L0-011</div>
<div class="t" style="letter-spacing:-0.305px;left:240.2px;top:163px;">BAR</div>
<div class="t" style="letter-spacing:-0.162px;left:528.0px;top:163px;">F.055.00</div>
<div class="t" style="letter-spacing:-0.045px;left:590.4px;top:163px;">6000000</div>
<div class="t" style="left:697.5px;top:163px">1</div><div class="t" style="left:761.8px;top:163px">0</div>
<svg style="left:5px;top:179px" width="14" height="14"><use href="#nt"/></svg>
<div class="t" style="letter-spacing:-0.057px;left:22.099999999999994px;top:180px;">A.00.02.007</div>
<div class="t" style="letter-spacing:-0.322px;left:96.0px;top:180px;">L0-011</div>
<div class="t" style="letter-spacing:-0.305px;left:240.2px;top:180px;">BAR</div>
<div class="t" style="letter-spacing:-0.162px;left:528.0px;top:180px;">F.055.00</div>
<div class="t" style="letter-spacing:-0.045px;left:590.4px;top:180px;">6000000</div>
<div class="t" style="left:697.5px;top:180px">1</div><div class="t" style="left:761.8px;top:180px">0</div>
<svg style="left:5px;top:196px" width="14" height="14"><use href="#nt"/></svg>
<div class="t" style="letter-spacing:-0.057px;left:22.099999999999994px;top:197px;">A.00.02.007</div>
<div class="t" style="letter-spacing:-0.322px;left:96.0px;top:197px;">L0-011</div>
<div class="t" style="letter-spacing:-0.305px;left:240.2px;top:197px;">BAR</div>
<div class="t" style="letter-spacing:-0.162px;left:528.0px;top:197px;">F.055.00</div>
<div class="t" style="letter-spacing:-0.045px;left:590.4px;top:197px;">6000000</div>
<div class="t" style="left:697.5px;top:197px">1</div><div class="t" style="left:761.8px;top:197px">0</div>
<svg style="left:5px;top:213px" width="14" height="14"><use href="#nt"/></svg>
<div class="t" style="letter-spacing:-0.057px;left:22.099999999999994px;top:214px;">A.00.02.007</div>
<div class="t" style="letter-spacing:-0.322px;left:96.0px;top:214px;">L0-011</div>
<div class="t" style="letter-spacing:-0.305px;left:240.2px;top:214px;">BAR</div>
<div class="t" style="letter-spacing:-0.162px;left:528.0px;top:214px;">F.055.00</div>
<div class="t" style="letter-spacing:-0.045px;left:590.4px;top:214px;">6000000</div>
<div class="t" style="left:697.5px;top:214px">1</div><div class="t" style="left:761.8px;top:214px">0</div>
<svg style="left:5px;top:230px" width="14" height="14"><use href="#nt"/></svg>
<div class="t" style="letter-spacing:-0.057px;left:22.099999999999994px;top:231px;">A.00.02.007</div>
<div class="t" style="letter-spacing:-0.322px;left:96.0px;top:231px;">L0-011</div>
<div class="t" style="letter-spacing:-0.305px;left:240.2px;top:231px;">BAR</div>
<div class="t" style="letter-spacing:-0.162px;left:528.0px;top:231px;">F.055.00</div>
<div class="t" style="letter-spacing:-0.045px;left:590.4px;top:231px;">6000000</div>
<div class="t" style="left:697.5px;top:231px">1</div><div class="t" style="left:761.8px;top:231px">0</div>
<svg style="left:5px;top:247px" width="14" height="14"><use href="#nt"/></svg>
<div class="t" style="letter-spacing:-0.175px;left:21.700000000000003px;top:248px;">A.01.01.001</div>
<div class="t" style="letter-spacing:-0.324px;left:96.0px;top:248px;">L1-001</div>
<div class="t" style="letter-spacing:-0.322px;left:240.2px;top:248px;">BRISBANE ROOM</div>
<div class="t" style="letter-spacing:-0.162px;left:528.0px;top:248px;">F.055.00</div>
<div class="t" style="letter-spacing:-0.045px;left:590.4px;top:248px;">6000000</div>
<div class="t" style="left:697.5px;top:248px">1</div><div class="t" style="left:761.8px;top:248px">0</div>
<svg style="left:5px;top:264px" width="14" height="14"><use href="#nt"/></svg>
<div class="t" style="letter-spacing:-0.175px;left:21.700000000000003px;top:265px;">A.01.01.001</div>
<div class="t" style="letter-spacing:-0.324px;left:96.0px;top:265px;">L1-001</div>
<div class="t" style="letter-spacing:-0.322px;left:240.2px;top:265px;">BRISBANE ROOM</div>
<div class="t" style="letter-spacing:-0.162px;left:528.0px;top:265px;">F.055.00</div>
<div class="t" style="letter-spacing:-0.045px;left:590.4px;top:265px;">6000000</div>
<div class="t" style="left:697.5px;top:265px">1</div><div class="t" style="left:761.8px;top:265px">0</div>
<svg style="left:5px;top:281px" width="14" height="14"><use href="#nt"/></svg>
<div class="t" style="letter-spacing:-0.175px;left:21.700000000000003px;top:282px;">A.01.01.001</div>
<div class="t" style="letter-spacing:-0.324px;left:96.0px;top:282px;">L1-001</div>
<div class="t" style="letter-spacing:-0.322px;left:240.2px;top:282px;">BRISBANE ROOM</div>
<div class="t" style="letter-spacing:-0.162px;left:528.0px;top:282px;">F.055.00</div>
<div class="t" style="letter-spacing:-0.045px;left:590.4px;top:282px;">6000000</div>
<div class="t" style="left:697.5px;top:282px">1</div><div class="t" style="left:761.8px;top:282px">0</div>
<svg style="left:5px;top:298px" width="14" height="14"><use href="#nt"/></svg>
<div class="t" style="letter-spacing:-0.175px;left:21.700000000000003px;top:299px;">A.01.01.001</div>
<div class="t" style="letter-spacing:-0.324px;left:96.0px;top:299px;">L1-001</div>
<div class="t" style="letter-spacing:-0.322px;left:240.2px;top:299px;">BRISBANE ROOM</div>
<div class="t" style="letter-spacing:-0.162px;left:528.0px;top:299px;">F.055.00</div>
<div class="t" style="letter-spacing:-0.045px;left:590.4px;top:299px;">6000000</div>
<div class="t" style="left:697.5px;top:299px">1</div><div class="t" style="left:761.8px;top:299px">0</div>
<svg style="left:5px;top:315px" width="14" height="14"><use href="#nt"/></svg>
<div class="t" style="letter-spacing:-0.175px;left:21.700000000000003px;top:316px;">A.01.01.001</div>
<div class="t" style="letter-spacing:-0.324px;left:96.0px;top:316px;">L1-001</div>
<div class="t" style="letter-spacing:-0.322px;left:240.2px;top:316px;">BRISBANE ROOM</div>
<div class="t" style="letter-spacing:-0.162px;left:528.0px;top:316px;">F.055.00</div>
<div class="t" style="letter-spacing:-0.045px;left:590.4px;top:316px;">6000000</div>
<div class="t" style="left:697.5px;top:316px">1</div><div class="t" style="left:761.8px;top:316px">0</div>
<svg style="left:5px;top:332px" width="14" height="14"><use href="#nt"/></svg>
<div class="t" style="letter-spacing:-0.175px;left:21.700000000000003px;top:333px;">A.01.01.001</div>
<div class="t" style="letter-spacing:-0.324px;left:96.0px;top:333px;">L1-001</div>
<div class="t" style="letter-spacing:-0.322px;left:240.2px;top:333px;">BRISBANE ROOM</div>
<div class="t" style="letter-spacing:-0.162px;left:528.0px;top:333px;">F.055.00</div>
<div class="t" style="letter-spacing:-0.045px;left:590.4px;top:333px;">6000000</div>
<div class="t" style="left:697.5px;top:333px">1</div><div class="t" style="left:761.8px;top:333px">0</div>
<svg style="left:5px;top:349px" width="14" height="14"><use href="#nt"/></svg>
<div class="t" style="letter-spacing:-0.175px;left:21.700000000000003px;top:350px;">A.01.01.001</div>
<div class="t" style="letter-spacing:-0.324px;left:96.0px;top:350px;">L1-001</div>
<div class="t" style="letter-spacing:-0.322px;left:240.2px;top:350px;">BRISBANE ROOM</div>
<div class="t" style="letter-spacing:-0.162px;left:528.0px;top:350px;">F.055.00</div>
<div class="t" style="letter-spacing:-0.045px;left:590.4px;top:350px;">6000000</div>
<div class="t" style="left:697.5px;top:350px">1</div><div class="t" style="left:761.8px;top:350px">0</div>
<svg style="left:5px;top:366px" width="14" height="14"><use href="#nt"/></svg>
<div class="t" style="letter-spacing:-0.175px;left:21.700000000000003px;top:367px;">A.01.01.001</div>
<div class="t" style="letter-spacing:-0.324px;left:96.0px;top:367px;">L1-001</div>
<div class="t" style="letter-spacing:-0.322px;left:240.2px;top:367px;">BRISBANE ROOM</div>
<div class="t" style="letter-spacing:-0.162px;left:528.0px;top:367px;">F.055.00</div>
<div class="t" style="letter-spacing:-0.045px;left:590.4px;top:367px;">6000000</div>
<div class="t" style="left:697.5px;top:367px">1</div><div class="t" style="left:761.8px;top:367px">0</div>
<svg style="left:5px;top:383px" width="14" height="14"><use href="#nt"/></svg>
<div class="t" style="letter-spacing:-0.175px;left:21.700000000000003px;top:384px;">A.01.01.001</div>
<div class="t" style="letter-spacing:-0.324px;left:96.0px;top:384px;">L1-001</div>
<div class="t" style="letter-spacing:-0.322px;left:240.2px;top:384px;">BRISBANE ROOM</div>
<div class="t" style="letter-spacing:-0.162px;left:528.0px;top:384px;">F.055.00</div>
<div class="t" style="letter-spacing:-0.045px;left:590.4px;top:384px;">6000000</div>
<div class="t" style="left:697.5px;top:384px">1</div><div class="t" style="left:761.8px;top:384px">0</div>
<svg style="left:5px;top:400px" width="14" height="14"><use href="#nt"/></svg>
<div class="t" style="letter-spacing:-0.175px;left:21.700000000000003px;top:401px;">A.01.01.001</div>
<div class="t" style="letter-spacing:-0.324px;left:96.0px;top:401px;">L1-001</div>
<div class="t" style="letter-spacing:-0.322px;left:240.2px;top:401px;">BRISBANE ROOM</div>
<div class="t" style="letter-spacing:-0.162px;left:528.0px;top:401px;">F.055.00</div>
<div class="t" style="letter-spacing:-0.045px;left:590.4px;top:401px;">6000000</div>
<div class="t" style="left:697.5px;top:401px">1</div><div class="t" style="left:761.8px;top:401px">0</div>
<svg style="left:5px;top:417px" width="14" height="14"><use href="#nt"/></svg>
<div class="t" style="letter-spacing:-0.175px;left:21.700000000000003px;top:418px;">A.01.01.001</div>
<div class="t" style="letter-spacing:-0.324px;left:96.0px;top:418px;">L1-001</div>
<div class="t" style="letter-spacing:-0.322px;left:240.2px;top:418px;">BRISBANE ROOM</div>
<div class="t" style="letter-spacing:-0.162px;left:528.0px;top:418px;">F.055.00</div>
<div class="t" style="letter-spacing:-0.045px;left:590.4px;top:418px;">6000000</div>
<div class="t" style="left:697.5px;top:418px">1</div><div class="t" style="left:761.8px;top:418px">0</div>
<svg style="left:5px;top:434px" width="14" height="14"><use href="#nt"/></svg>
<div class="t" style="letter-spacing:-0.175px;left:21.700000000000003px;top:435px;">A.01.01.001</div>
<div class="t" style="letter-spacing:-0.324px;left:96.0px;top:435px;">L1-001</div>
<div class="t" style="letter-spacing:-0.322px;left:240.2px;top:435px;">BRISBANE ROOM</div>
<div class="t" style="letter-spacing:-0.162px;left:528.0px;top:435px;">F.055.00</div>
<div class="t" style="letter-spacing:-0.045px;left:590.4px;top:435px;">6000000</div>
<div class="t" style="left:697.5px;top:435px">1</div><div class="t" style="left:761.8px;top:435px">0</div>
<svg style="left:5px;top:451px" width="14" height="14"><use href="#nt"/></svg>
<div class="t" style="letter-spacing:-0.175px;left:21.700000000000003px;top:452px;">A.01.01.001</div>
<div class="t" style="letter-spacing:-0.324px;left:96.0px;top:452px;">L1-001</div>
<div class="t" style="letter-spacing:-0.322px;left:240.2px;top:452px;">BRISBANE ROOM</div>
<div class="t" style="letter-spacing:-0.162px;left:528.0px;top:452px;">F.055.00</div>
<div class="t" style="letter-spacing:-0.045px;left:590.4px;top:452px;">6000000</div>
<div class="t" style="left:697.5px;top:452px">1</div><div class="t" style="left:761.8px;top:452px">0</div>
<svg style="left:5px;top:468px" width="14" height="14"><use href="#nt"/></svg>
<div class="t" style="letter-spacing:-0.175px;left:21.700000000000003px;top:469px;">A.01.01.001</div>
<div class="t" style="letter-spacing:-0.324px;left:96.0px;top:469px;">L1-001</div>
<div class="t" style="letter-spacing:-0.322px;left:240.2px;top:469px;">BRISBANE ROOM</div>
<div class="t" style="letter-spacing:-0.162px;left:528.0px;top:469px;">F.055.00</div>
<div class="t" style="letter-spacing:-0.045px;left:590.4px;top:469px;">6000000</div>
<div class="t" style="left:697.5px;top:469px">1</div><div class="t" style="left:761.8px;top:469px">0</div>
<svg style="left:5px;top:485px" width="14" height="14"><use href="#nt"/></svg>
<div class="t" style="letter-spacing:-0.175px;left:21.700000000000003px;top:486px;">A.01.01.001</div>
<div class="t" style="letter-spacing:-0.324px;left:96.0px;top:486px;">L1-001</div>
<div class="t" style="letter-spacing:-0.322px;left:240.2px;top:486px;">BRISBANE ROOM</div>
<div class="t" style="letter-spacing:-0.162px;left:528.0px;top:486px;">F.055.00</div>
<div class="t" style="letter-spacing:-0.045px;left:590.4px;top:486px;">6000000</div>
<div class="t" style="left:697.5px;top:486px">1</div><div class="t" style="left:761.8px;top:486px">0</div>
<svg style="left:5px;top:502px" width="14" height="14"><use href="#nt"/></svg>
<div class="t" style="letter-spacing:-0.175px;left:21.700000000000003px;top:503px;">A.01.01.001</div>
<div class="t" style="letter-spacing:-0.324px;left:96.0px;top:503px;">L1-001</div>
<div class="t" style="letter-spacing:-0.322px;left:240.2px;top:503px;">BRISBANE ROOM</div>
<div class="t" style="letter-spacing:-0.162px;left:528.0px;top:503px;">F.055.00</div>
<div class="t" style="letter-spacing:-0.045px;left:590.4px;top:503px;">6000000</div>
<div class="t" style="left:697.5px;top:503px">1</div><div class="t" style="left:761.8px;top:503px">0</div>
<svg style="left:5px;top:519px" width="14" height="14"><use href="#nt"/></svg>
<div class="t" style="letter-spacing:-0.175px;left:21.700000000000003px;top:520px;">A.01.01.001</div>
<div class="t" style="letter-spacing:-0.324px;left:96.0px;top:520px;">L1-001</div>
<div class="t" style="letter-spacing:-0.322px;left:240.2px;top:520px;">BRISBANE ROOM</div>
<div class="t" style="letter-spacing:-0.162px;left:528.0px;top:520px;">F.055.00</div>
<div class="t" style="letter-spacing:-0.045px;left:590.4px;top:520px;">6000000</div>
<div class="t" style="left:697.5px;top:520px">1</div><div class="t" style="left:761.8px;top:520px">0</div>
</div>
<div class="a" style="left:1242px;top:300px;width:16px;height:523px;background:#f0f0f0;"></div>
<div class="a" style="left:1242px;top:317px;width:15px;height:105px;background:#cdcdcd;"></div>
<svg style="left:1242px;top:299px" width="16" height="17" viewBox="0 0 16 17"><path d="M4 11.6 L7.5 8 L11 11.6" fill="none" stroke="#505050" stroke-width="2"/></svg>
<svg style="left:1242px;top:806px" width="16" height="17" viewBox="0 0 16 17"><path d="M4 6.8 L7.5 10.4 L11 6.8" fill="none" stroke="#505050" stroke-width="2"/></svg>
<div class="a" style="left:1263px;top:49px;width:1px;height:782px;background:#e6e6e6;"></div>
<div class="a" style="left:1264px;top:49px;width:1px;height:782px;background:#cacaca;"></div>
<div class="a" style="left:1265px;top:49px;width:1px;height:782px;background:#a0a0a0;"></div>
<div class="a" style="left:1265px;top:0px;width:1px;height:49px;background:#707070;"></div>
<div class="a" style="left:0px;top:828px;width:1266px;height:1px;background:#dedede;"></div>
<div class="a" style="left:0px;top:829px;width:1266px;height:2px;background:#a0a0a0;"></div>
<div class="a" style="left:496px;top:401px;width:336px;height:366px;background:#f0f0f0;border:1px solid #1883d7;box-shadow:0 2px 10px rgba(0,0,0,0.28),0 0 3px rgba(0,0,0,0.12)"></div>
<div class="a" style="left:497px;top:402px;width:334px;height:30px;background:#ffffff;"></div>
<svg style="left:505px;top:408px" width="16" height="16" viewBox="0 0 16 16"><defs><linearGradient id="gb" x1="0" y1="0" x2="1" y2="1"><stop offset="0" stop-color="#f4c433"/><stop offset="1" stop-color="#cf8a0a"/></linearGradient></defs><path d="M1.2 3.4 Q1.2 2.4 2.4 2 L7.6 0.6 Q8.6 0.4 9.6 0.8 L14 2.6 Q14.8 3 14.8 4 L14.6 11.4 Q14.6 12.2 13.8 12.6 L8.2 15.2 Q7.4 15.5 6.6 15.1 L2 12.6 Q1.2 12.1 1.2 11.2 Z" fill="url(#gb)"/><path d="M1.6 3.2 L8.4 0.8 L14.4 3.2 L7.4 5.8 Z" fill="#f3c63e"/><path d="M3.4 3.8 L3.4 13.2 M1.4 8 L6.2 9.2 L14.6 7.8 M10.6 3.6 L10.6 14 M3.4 3.8 L9.6 1.4 M10.6 3.6 L5.4 1.6" stroke="#5e5424" stroke-width="0.8" fill="none" opacity="0.75"/></svg>
<div class="t" style="font-size:12px;line-height:14px;height:14px;letter-spacing:-0.244px;left:526.1px;top:410px;">Edit</div>
<svg style="left:811px;top:411px" width="10" height="10" viewBox="0 0 10 10"><path d="M0.3 0.3 L9.7 9.7 M9.7 0.3 L0.3 9.7" stroke="#1a1a1a" stroke-width="1.1" fill="none"/></svg>
<div class="t" style="letter-spacing:-0.409px;left:506.8px;top:442px;">Room</div>
<div class="t" style="letter-spacing:-0.399px;left:506.8px;top:465px;">Item</div>
<div class="t" style="letter-spacing:-0.139px;left:506.8px;top:488px;">Registration number</div>
<div class="t" style="letter-spacing:-0.215px;left:506.8px;top:511px;">Serial Number</div>
<div class="t" style="letter-spacing:0.036px;left:506.8px;top:534px;">Status</div>
<div class="t" style="letter-spacing:-0.411px;left:506.8px;top:557px;">Comment</div>
<div class="t" style="letter-spacing:-0.308px;left:506.8px;top:652px;">Follow-up</div>
<div class="t" style="letter-spacing:-0.096px;left:506.8px;top:672px;">Responsibility</div>
<div class="t" style="letter-spacing:-0.251px;left:506.8px;top:695px;">Deadline</div>
<div class="a" style="left:614px;top:442px;width:200px;height:20px;background:#f0f0f0;border:1px solid #7a7a7a"></div>
<div class="a" style="left:614px;top:465px;width:200px;height:20px;background:#f0f0f0;border:1px solid #7a7a7a"></div>
<div class="a" style="left:614px;top:488px;width:200px;height:20px;background:#fff;border:1px solid #7a7a7a"></div>
<div class="a" style="left:614px;top:511px;width:200px;height:20px;background:#fff;border:1px solid #7a7a7a"></div>
<div class="t" style="letter-spacing:-0.067px;left:616.6px;top:445px;">A.00.02.007/L0-011 - BAR</div>
<div class="t" style="letter-spacing:-0.105px;left:616.6px;top:468px;">F.055 - Task chair type 2</div>
<div class="a" style="left:614px;top:534px;width:200px;height:21px;background:#cce4f7;border:1px solid #0078d7"></div>
<div class="t" style="letter-spacing:-0.468px;left:618.1px;top:538px;">Missing</div>
<svg style="left:801px;top:542px" width="9" height="6" viewBox="0 0 9 6"><path d="M0.3 0.6 L4.4 4.7 L8.5 0.6" fill="none" stroke="#404040" stroke-width="1.1"/></svg>
<div class="a" style="left:498px;top:530px;width:73px;height:25px;background:transparent;border:3px solid #f83e40;box-shadow:1px 2px 4px rgba(0,0,0,0.4),inset 1px 1px 4px rgba(0,0,0,0.38)"></div>
<div class="a" style="left:614px;top:652px;width:13px;height:13px;background:#fff;border:1px solid #333"></div>
<div class="a" style="left:614px;top:672px;width:200px;height:20px;background:#fff;border:1px solid #7a7a7a"></div>
<div class="a" style="left:614px;top:695px;width:200px;height:20px;background:#fff;border:1px solid #7a7a7a"></div>
<div class="a" style="left:617px;top:698px;width:13px;height:13px;background:#fff;border:1px solid #0078d7"></div>
<div class="t" style="font-size:12px;line-height:14px;height:14px;color:#707070;letter-spacing:-0.064px;left:638.5px;top:698px;">5/09/2018</div>
<svg style="left:799px;top:699px" width="14" height="12" viewBox="0 0 14 12"><path d="M0.6 0.8 H10.2 V8.4 L7.8 10.8 H0.6 Z" fill="#e9e9ee" stroke="#8f8f9a" stroke-width="1"/><path d="M2.5 3.6 H8.4 M2.5 5.6 H8.4 M2.5 7.6 H8.4 M3.6 2.6 V8.6 M5.5 2.6 V8.6 M7.4 2.6 V8.6" stroke="#9a9aa6" stroke-width="0.8" fill="none"/><path d="M10.7 1.4 V8.7 L8.1 11.3 H1.2" stroke="#74747e" stroke-width="0.9" fill="none"/><path d="M11.8 4.6 L13.6 4.6 L12.7 6 Z" fill="#555"/></svg>
<div class="a" style="left:642px;top:738px;width:78px;height:18px;background:#e1e1e1;border:2px solid #0078d7"></div>
<div class="t" style="letter-spacing:0.021px;left:672.9px;top:740px;">Ok</div>
<div class="a" style="left:732px;top:738px;width:78px;height:18px;background:#e1e1e1;border:1px solid #adadad"></div>
<div class="t" style="letter-spacing:-0.039px;left:752.9px;top:740px;">Cancel</div>
<div class="a" style="left:614px;top:555px;width:200px;height:93px;background:#fff;border:1px solid #0078d7;box-shadow:3px 3px 4px rgba(0,0,0,0.5)"></div>
<div class="a" style="left:615px;top:569px;width:198px;height:13px;background:#0078d7;"></div>
<div class="t" style="letter-spacing:-0.511px;left:617.4px;top:556px;">Missing</div>
<div class="t" style="color:#fff;letter-spacing:-0.426px;left:617.4px;top:569px;">Damaged</div>
<div class="t" style="letter-spacing:-0.330px;left:617.4px;top:582px;">Returned</div>
<div class="t" style="letter-spacing:-0.302px;left:617.4px;top:595px;">In storage</div>
<div class="t" style="letter-spacing:-0.350px;left:617.4px;top:608px;">In situ</div>
<div class="t" style="letter-spacing:-0.316px;left:617.4px;top:621px;">Testing required</div>
<div class="t" style="letter-spacing:-0.318px;left:617.4px;top:634px;">Installed</div>
<div class="a" style="left:0px;top:0px;width:1px;height:831px;background:#979797;"></div>
</body></html>
